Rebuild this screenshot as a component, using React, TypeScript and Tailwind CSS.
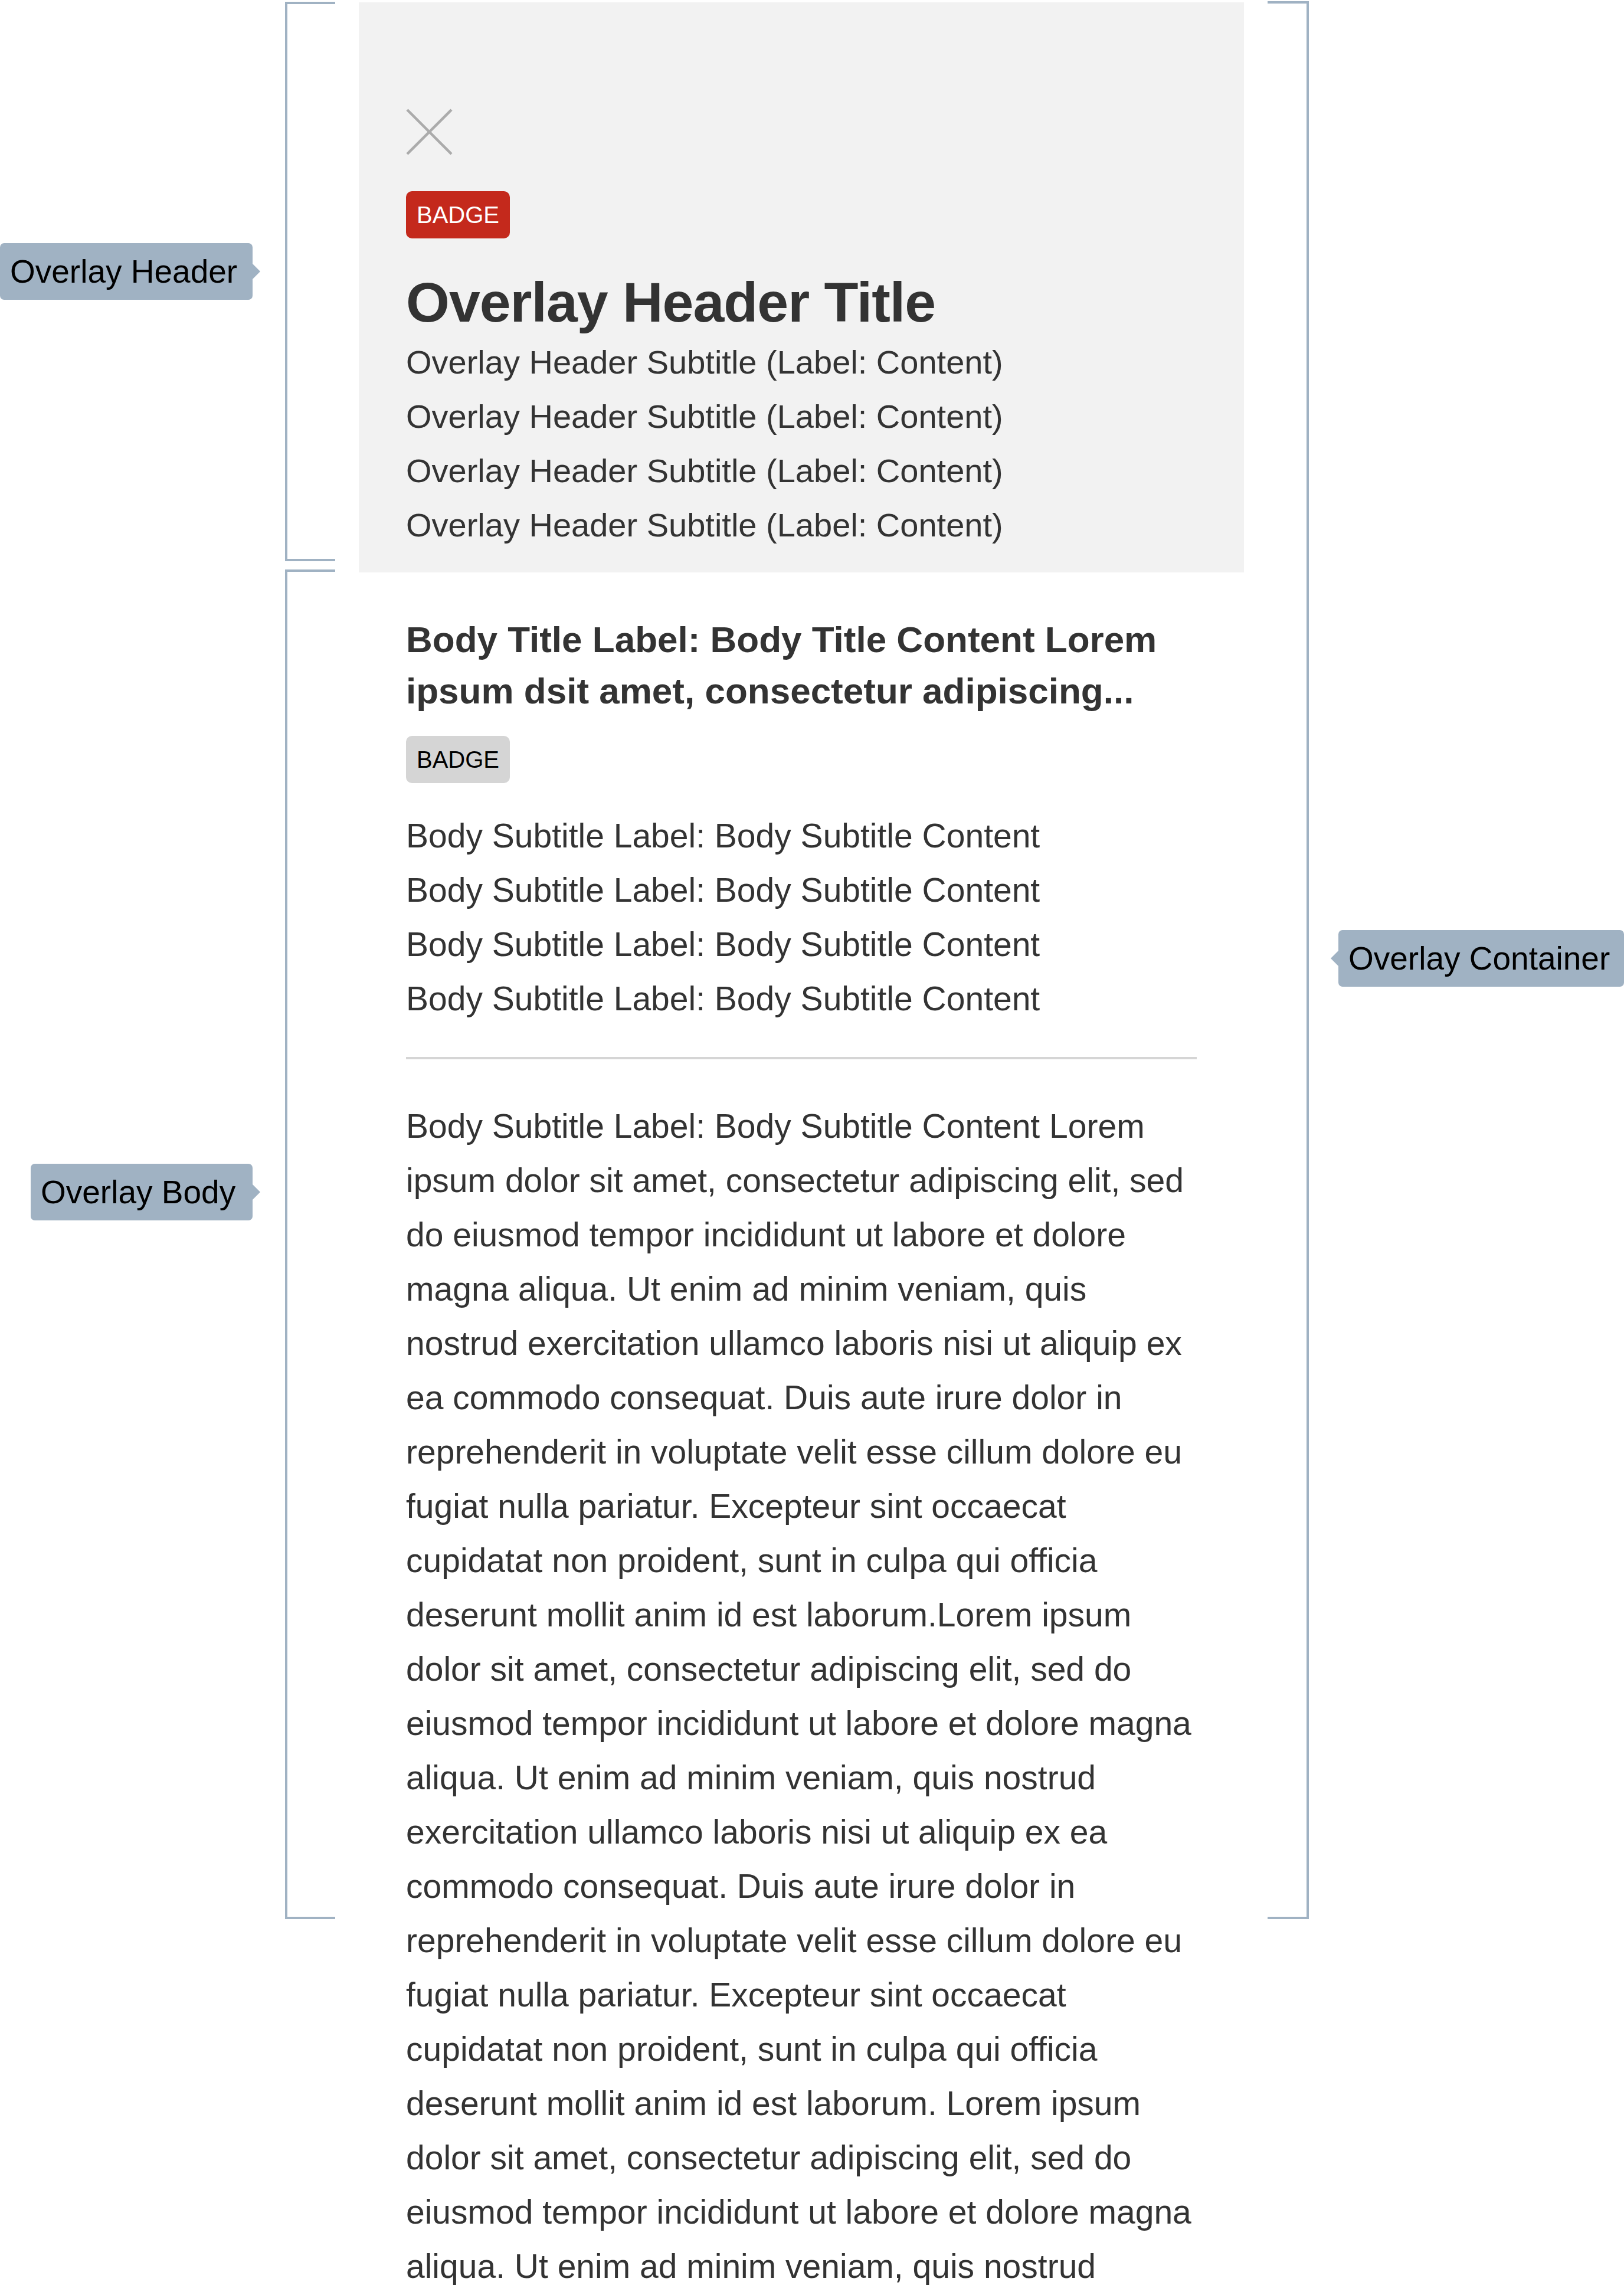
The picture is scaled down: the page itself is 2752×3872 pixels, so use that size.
import React from 'react';

// Annotated spec sheet of an overlay panel: header + body, with callouts around it.

const HEADER_SUBTITLES = [
  'Overlay Header Subtitle (Label: Content)',
  'Overlay Header Subtitle (Label: Content)',
  'Overlay Header Subtitle (Label: Content)',
  'Overlay Header Subtitle (Label: Content)',
];

const BODY_SUBTITLES = [
  'Body Subtitle Label: Body Subtitle Content',
  'Body Subtitle Label: Body Subtitle Content',
  'Body Subtitle Label: Body Subtitle Content',
  'Body Subtitle Label: Body Subtitle Content',
];

// paragraph lines, broken the same way as the design
const PARAGRAPH = [
  'Body Subtitle Label: Body Subtitle Content Lorem',
  'ipsum dolor sit amet, consectetur adipiscing elit, sed',
  'do eiusmod tempor incididunt ut labore et dolore',
  'magna aliqua. Ut enim ad minim veniam, quis',
  'nostrud exercitation ullamco laboris nisi ut aliquip ex',
  'ea commodo consequat. Duis aute irure dolor in',
  'reprehenderit in voluptate velit esse cillum dolore eu',
  'fugiat nulla pariatur. Excepteur sint occaecat',
  'cupidatat non proident, sunt in culpa qui officia',
  'deserunt mollit anim id est laborum.Lorem ipsum',
  'dolor sit amet, consectetur adipiscing elit, sed do',
  'eiusmod tempor incididunt ut labore et dolore magna',
  'aliqua. Ut enim ad minim veniam, quis nostrud',
  'exercitation ullamco laboris nisi ut aliquip ex ea',
  'commodo consequat. Duis aute irure dolor in',
  'reprehenderit in voluptate velit esse cillum dolore eu',
  'fugiat nulla pariatur. Excepteur sint occaecat',
  'cupidatat non proident, sunt in culpa qui officia',
  'deserunt mollit anim id est laborum. Lorem ipsum',
  'dolor sit amet, consectetur adipiscing elit, sed do',
  'eiusmod tempor incididunt ut labore et dolore magna',
  'aliqua. Ut enim ad minim veniam, quis nostrud',
];

function CloseIcon() {
  return (
    <svg width="79" height="79" viewBox="0 0 79 79" fill="none">
      <line x1="2" y1="2" x2="77" y2="77" stroke="#ababab" strokeWidth="4.5" />
      <line x1="77" y1="2" x2="2" y2="77" stroke="#ababab" strokeWidth="4.5" />
    </svg>
  );
}

function ArrowRight() {
  return (
    <svg width="13" height="26" viewBox="0 0 13 26" className="shrink-0">
      <polygon points="0,0 13,13 0,26" fill="#a0b2c3" />
    </svg>
  );
}

function ArrowLeft() {
  return (
    <svg width="13" height="26" viewBox="0 0 13 26" className="shrink-0">
      <polygon points="13,0 0,13 13,26" fill="#a0b2c3" />
    </svg>
  );
}

export default function App() {
  return (
    <div className="relative h-[3872px] w-[2752px] overflow-hidden bg-white pt-[4px] font-['Liberation_Sans',Helvetica,Arial,sans-serif] text-[#333333]">
      {/* Overlay container */}
      <div className="ml-[608px] w-[1500px]">
        {/* Header */}
        <div className="bg-[#f2f2f2] px-[80px] pt-[180px] pb-[34px]">
          <CloseIcon />
          <div className="mt-[61px] flex">
            <span className="flex h-[80px] items-center rounded-[10px] bg-[#c4291c] px-[18px] text-[40px] leading-none text-white">
              BADGE
            </span>
          </div>
          <h1 className="mt-[52px] text-[95px] font-bold leading-[112px] tracking-[-1px] whitespace-nowrap">
            Overlay Header Title
          </h1>
          <div className="flex flex-col">
            {HEADER_SUBTITLES.map((s, i) => (
              <p key={i} className="text-[56px] leading-[92px] whitespace-nowrap">{s}</p>
            ))}
          </div>
        </div>

        {/* Body */}
        <div className="px-[80px] pt-[70px]">
          <h2 className="text-[62px] font-bold leading-[87px]">
            <span className="block whitespace-nowrap">Body Title Label: Body Title Content Lorem</span>
            <span className="block whitespace-nowrap">ipsum dsit amet, consectetur adipiscing...</span>
          </h2>
          <div className="mt-[33px] flex">
            <span className="flex h-[80px] items-center rounded-[10px] bg-[#d5d5d5] px-[18px] text-[40px] leading-none text-black">
              BADGE
            </span>
          </div>
          <div className="mt-[43px] flex flex-col">
            {BODY_SUBTITLES.map((s, i) => (
              <p key={i} className="text-[57px] leading-[92px] whitespace-nowrap">{s}</p>
            ))}
          </div>
          <div className="mt-[53px] h-[4px] bg-[#d5d5d5]" />
          <p className="mt-[67px] text-[57px] leading-[92px]">
            {PARAGRAPH.map((line, i) => (
              <span key={i} className="block whitespace-nowrap">{line}</span>
            ))}
          </p>
        </div>
      </div>

      {/* Brackets */}
      <div className="absolute left-[483px] top-[3px] h-[948px] w-[85px] border-b-4 border-l-4 border-t-4 border-[#a0b2c3]" />
      <div className="absolute left-[483px] top-[965px] h-[2287px] w-[85px] border-b-4 border-l-4 border-t-4 border-[#a0b2c3]" />
      <div className="absolute left-[2148px] top-[2px] h-[3250px] w-[70px] border-b-4 border-r-4 border-t-4 border-[#a0b2c3]" />

      {/* Callouts */}
      <div className="absolute left-0 top-[412px] flex items-center">
        <div className="flex h-[96px] w-[428px] items-center rounded-[7px] bg-[#a0b2c3] pl-[17px] text-[55px] leading-none text-black whitespace-nowrap">
          Overlay Header
        </div>
        <ArrowRight />
      </div>
      <div className="absolute left-[52px] top-[1972px] flex items-center">
        <div className="flex h-[96px] w-[376px] items-center rounded-[7px] bg-[#a0b2c3] pl-[17px] text-[55px] leading-none text-black whitespace-nowrap">
          Overlay Body
        </div>
        <ArrowRight />
      </div>
      <div className="absolute left-[2255px] top-[1576px] flex items-center">
        <ArrowLeft />
        <div className="flex h-[96px] w-[484px] items-center rounded-[7px] bg-[#a0b2c3] pl-[17px] text-[55px] leading-none text-black whitespace-nowrap">
          Overlay Container
        </div>
      </div>
    </div>
  );
}
